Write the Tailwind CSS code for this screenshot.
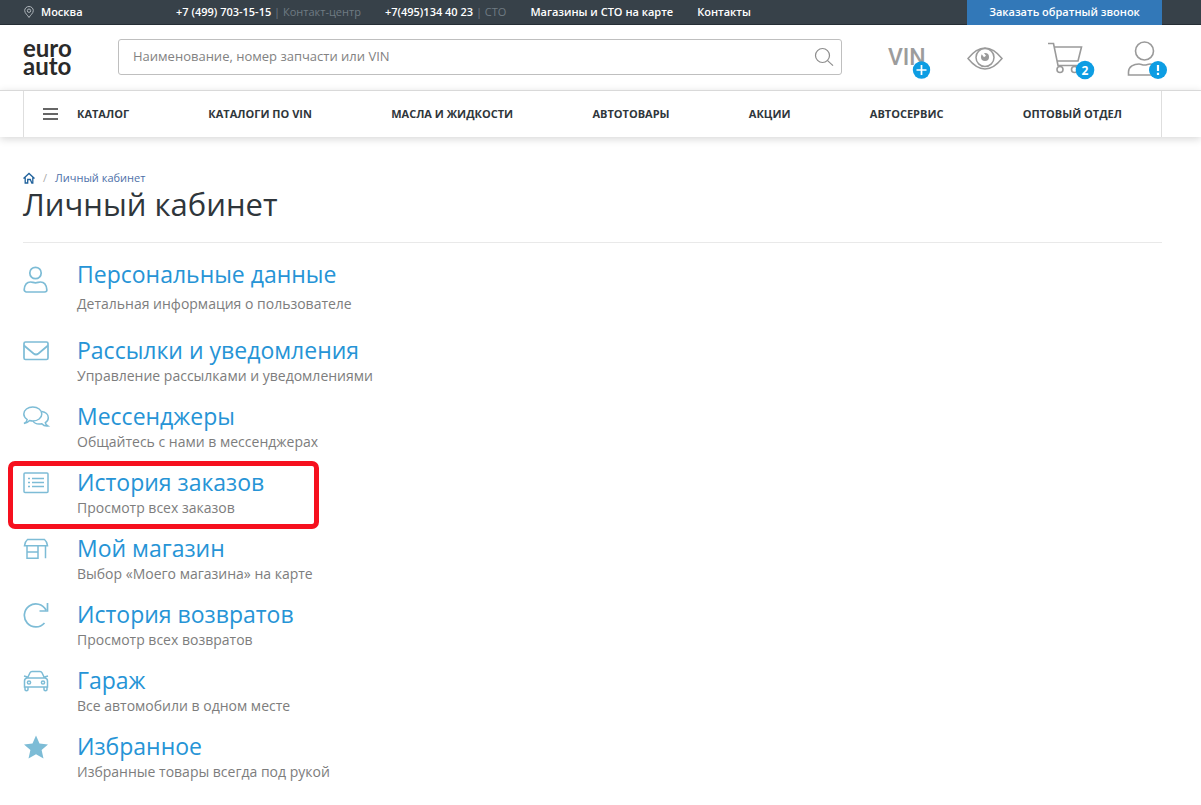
<!DOCTYPE html>
<html lang="ru">
<head>
<meta charset="utf-8">
<meta name="viewport" content="width=device-width, initial-scale=1">
<title>Личный кабинет</title>
<script src="https://cdn.jsdelivr.net/npm/@tailwindcss/browser@4"></script>
</head>
<body class="bg-white font-['Open_Sans','Noto_Sans',sans-serif] text-[#2f363b]">
<div class="bg-[#374149] text-white">
  <div class="flex h-[25px] items-stretch border-b border-[#252e35] pl-[23px] pr-[39px] text-[11px] font-semibold">
    <a href="#" class="flex w-[153px] items-center gap-[6px]">
      <svg class="h-3 w-3" viewBox="0 0 12 12" fill="none" stroke="#aeb5ba"><path d="M6 11.5C4.8 9.2 1.7 7.3 1.7 4.6a4.3 4.1 0 0 1 8.6 0C10.3 7.3 7.2 9.2 6 11.5z"/><circle cx="6" cy="4.7" r="1.7"/></svg>
      Москва</a>
    <div class="flex items-center gap-6">
      <div><a href="tel:+74997031515">+7 (499) 703-15-15</a> <span class="font-normal text-[#6f7b83]">| Контакт-центр</span></div>
      <div><a href="tel:+74951344023">+7(495)134 40 23</a> <span class="font-normal text-[#6f7b83]">| СТО</span></div>
      <a href="#">Магазины и СТО на карте</a>
      <a href="#">Контакты</a>
    </div>
    <button type="button" class="ml-auto -mb-px w-[195px] bg-[#3278b8]">Заказать обратный звонок</button>
  </div>
</div>

<header class="flex h-[65px] items-center pb-[2px] pl-[23px] pr-[34px]">
  <a href="#" class="w-[95px] shrink-0 font-['Lato',sans-serif] text-[24px] font-bold leading-[18px] text-[#2a2a2a]">euro<br>auto</a>
  <form class="relative flex h-9 flex-1">
    <input aria-label="Поиск" type="text" placeholder="Наименование, номер запчасти или VIN" class="w-full rounded-[3px] border border-[#bfbfbf] px-[14px] pr-10 text-[13px] outline-none placeholder:text-[#828282]">
    <button type="button" aria-label="Найти" class="absolute right-2 top-2">
      <svg class="h-5 w-5" viewBox="0 0 20 20" fill="none" stroke="#8c8c8c" stroke-width="1.2"><circle cx="8.5" cy="8.5" r="7"/><path d="M13.6 13.6l5.4 5"/></svg>
    </button>
  </form>
  <div class="ml-[46px] flex items-center">
    <a href="#" aria-label="VIN" class="w-[79px]"><svg class="h-10 w-11 overflow-visible" viewBox="0 0 44 40"><text x="0" y="28" font-family="Roboto" font-size="23" font-weight="500" fill="#9c9c9c">VIN</text><circle cx="33.500" cy="33" r="8.700" fill="#0d9de3"/><path d="M28.500 33h10M33.500 28v10" stroke="#fff" stroke-width="1.700"/></svg></a>
    <a href="#" aria-label="Просмотренные" class="w-[80px]"><svg class="h-10 w-9" viewBox="0 0 36 40" fill="none" stroke="#9a9a9a" stroke-width="1.500"><path d="M1 21.500C7 14 12 11 18 11S29 14 35 21.500c-6 7.500-11 10.500-17 10.500S7 29 1 21.500z"/><circle cx="18" cy="20.500" r="9"/><circle cx="18" cy="20" r="4" fill="#9a9a9a" stroke="none"/><path d="M15 15.500l3 4" stroke="#fff" stroke-width="2.500"/></svg></a>
    <a href="#" aria-label="Корзина" class="w-20"><svg class="h-10 w-12 overflow-visible" viewBox="0 0 48 40" fill="none" stroke="#9a9a9a" stroke-width="1.600"><path d="M1 6.500h5.500L11 28.500h20.500M7.500 10h27L31 24H10.200"/><circle cx="13" cy="32.500" r="3"/><circle cx="27.500" cy="32.500" r="3"/><circle cx="38" cy="33" r="9.300" fill="#0d9de3" stroke="none"/><text x="38" y="37.500" text-anchor="middle" font-family="Open Sans" font-size="12" font-weight="700" fill="#fff" stroke="none">2</text></svg></a>
    <a href="#" aria-label="Профиль"><svg class="h-10 w-10 overflow-visible" viewBox="0 0 40 40" fill="none" stroke="#9a9a9a" stroke-width="1.600"><circle cx="17.500" cy="14" r="9"/><path d="M1.500 38h28.500V34.500c0-5-3-7.500-7-7.500-2 0-3 1-5.500 1s-3.500-1-5.500-1c-5 0-10.500 2.500-10.500 8z"/><circle cx="31" cy="33" r="9" fill="#0d9de3" stroke="none"/><path d="M31 28v6M31 35.700v2.300" stroke="#fff" stroke-width="2.200"/></svg></a>
  </div>
</header>

<nav class="border-t border-[#d9d9d9] pl-[23px] pr-[39px] shadow-[0_2px_8px_rgba(0,0,0,0.16)]">
  <div class="flex h-[46px] items-center justify-between border-x border-[#dedede] pl-[19px] pr-[39px] text-[11px] font-bold">
    <a href="#" class="flex items-center gap-[19px]"><svg class="h-[14px] w-[15px]" viewBox="0 0 15 14" stroke="#666" stroke-width="1.800"><path d="M0 2h15M0 7h15M0 12h15"/></svg>КАТАЛОГ</a>
    <a href="#">КАТАЛОГИ ПО VIN</a>
    <a href="#">МАСЛА И ЖИДКОСТИ</a>
    <a href="#">АВТОТОВАРЫ</a>
    <a href="#">АКЦИИ</a>
    <a href="#">АВТОСЕРВИС</a>
    <a href="#">ОПТОВЫЙ ОТДЕЛ</a>
  </div>
</nav>

<main class="pl-[23px] pr-[39px] pt-[33px]">
  <div class="flex h-4 items-center text-[11px] text-[#4d6fa8]">
    <a href="#" aria-label="Главная"><svg class="h-3 w-3" viewBox="0 0 12 12" fill="none" stroke="#21629c" stroke-width="1.300"><path d="M.5 6.500L6 1.500l5.500 5M2.200 5.500v5.500h2.500V7.500h2.600l1.500 3.500h1V5.500"/></svg></a>
    <span class="ml-2 mr-2 text-[#aaa]">/</span>
    <a href="#">Личный кабинет</a>
  </div>
  <h1 class="border-b border-[#e9e9e9] pb-5 text-[31px] leading-9">Личный кабинет</h1>

  <ul class="pt-[15px]">
    <li class="flex h-[76px]">
      <svg class="mt-2 h-[27px] w-[54px] shrink-0" viewBox="0 0 54 27" fill="none" stroke="#7dbcd6" stroke-width="1.700"><circle cx="12.500" cy="7" r="5.700"/><path d="M4.500 26h17c2 0 2.500-1 2.300-2.500C23.300 18.500 21 16 17.500 16c-1.800 0-3 .8-5 .8s-3.200-.8-5-.8C4 16 1.700 18.500 1.200 23.500 1 25 2.500 26 4.500 26z"/></svg>
      <div><a href="#" class="block text-[23px] leading-8 text-[#2694d6]">Персональные данные</a><p class="pt-1 text-[14px] leading-5 text-[#7d7d7d]">Детальная информация о пользователе</p></div>
    </li>
    <li class="flex h-[66px]">
      <svg class="mt-1 h-[26px] w-[54px] shrink-0" viewBox="0 0 54 26" fill="none" stroke="#7dbcd6" stroke-width="1.700"><rect x="1" y="4" width="24" height="17.500" rx="1.500"/><path d="M1 7.500l9.500 8q2.500 2 5 0L25 7.500"/></svg>
      <div><a href="#" class="block text-[23px] leading-8 text-[#2694d6]">Рассылки и уведомления</a><p class="text-[14px] leading-5 text-[#7d7d7d]">Управление рассылками и уведомлениями</p></div>
    </li>
    <li class="flex h-[66px]">
      <svg class="mt-1 h-[26px] w-[54px] shrink-0" viewBox="0 0 54 26" fill="none" stroke="#7dbcd6" stroke-width="1.500"><path d="M1 19.500c2-1 3-2.500 3.200-4C2 14 .8 12.200.8 10c0-4 4-7 9-7s9 3 9 7-4 7-9 7c-1.200 0-2.200-.2-3.200-.5-1.500 1.700-3.600 2.800-5.600 3z"/><path d="M18.800 7.500c3.800.5 6.500 3.200 6.500 6.200 0 2.300-1.200 4-3 5 .2 1.300 1 2.500 2.500 3.300-2.500.3-4.500-.5-6-2.200-4 .7-7.500-.5-8.800-2.800"/></svg>
      <div><a href="#" class="block text-[23px] leading-8 text-[#2694d6]">Мессенджеры</a><p class="text-[14px] leading-5 text-[#7d7d7d]">Общайтесь с нами в мессенджерах</p></div>
    </li>
    <li class="relative flex h-[66px]">
      <div class="pointer-events-none absolute -left-[15px] -top-[5px] h-[68px] w-[311px] rounded-[7px] border-[5px] border-[#f6101e]"></div>
      <svg class="mt-1 h-[26px] w-[54px] shrink-0" viewBox="0 0 54 26" fill="none" stroke="#7dbcd6" stroke-width="1.500"><rect x="1" y="3" width="24" height="19.500" rx="1"/><path d="M9 8.500h12M9 12.500h12M9 16.500h12M5 8.500h2M5 12.500h2M5 16.500h2"/></svg>
      <div><a href="#" class="block text-[23px] leading-8 text-[#2694d6]">История заказов</a><p class="text-[14px] leading-5 text-[#7d7d7d]">Просмотр всех заказов</p></div>
    </li>
    <li class="flex h-[66px]">
      <svg class="mt-1 h-[26px] w-[54px] shrink-0" viewBox="0 0 54 26" fill="none" stroke="#7dbcd6" stroke-width="1.500"><path d="M4.500 3.500h17q2.500 2 3 6.200H1.500q.5-4.200 3-6.200zM4 10v12.300h11V10M4 16h11M22.500 10v12.300"/></svg>
      <div><a href="#" class="block text-[23px] leading-8 text-[#2694d6]">Мой магазин</a><p class="text-[14px] leading-5 text-[#7d7d7d]">Выбор «Моего магазина» на карте</p></div>
    </li>
    <li class="flex h-[66px]">
      <svg class="mt-1 h-[26px] w-[54px] shrink-0" viewBox="0 0 54 26" fill="none" stroke="#7dbcd6" stroke-width="1.700"><path d="M21.500 21A11.500 11.500 0 1 1 23 8M24.500 1v8h-8"/></svg>
      <div><a href="#" class="block text-[23px] leading-8 text-[#2694d6]">История возвратов</a><p class="text-[14px] leading-5 text-[#7d7d7d]">Просмотр всех возвратов</p></div>
    </li>
    <li class="flex h-[66px]">
      <svg class="mt-1 h-[26px] w-[54px] shrink-0" viewBox="0 0 54 26" fill="none" stroke="#7dbcd6" stroke-width="1.500"><path d="M4.500 10L7 4.800Q7.600 3.500 9 3.500h8q1.400 0 2 1.300L21.500 10M4 10h18q2.500.5 2.500 3v6h-23v-6Q1.500 10.500 4 10zM2 19v2.500q0 1.200 1.500 1.200T5 21.500V19M21 19v2.500q0 1.200 1.500 1.200t1.500-1.200V19M4.500 9L1 8M21.500 9L25 8"/><circle cx="6" cy="14.500" r="1.600"/><circle cx="20" cy="14.500" r="1.600"/></svg>
      <div><a href="#" class="block text-[23px] leading-8 text-[#2694d6]">Гараж</a><p class="text-[14px] leading-5 text-[#7d7d7d]">Все автомобили в одном месте</p></div>
    </li>
    <li class="flex">
      <svg class="mt-1 h-[26px] w-[54px] shrink-0" viewBox="0 0 54 26" fill="#7dbcd6"><path d="M13 1.500l3.500 8 8.500.9-6.400 5.700 1.900 8.400L13 20.200l-7.500 4.300 1.900-8.400L1 10.400l8.500-.9z"/></svg>
      <div><a href="#" class="block text-[23px] leading-8 text-[#2694d6]">Избранное</a><p class="text-[14px] leading-5 text-[#7d7d7d]">Избранные товары всегда под рукой</p></div>
    </li>
  </ul>
</main>
</body>
</html>
